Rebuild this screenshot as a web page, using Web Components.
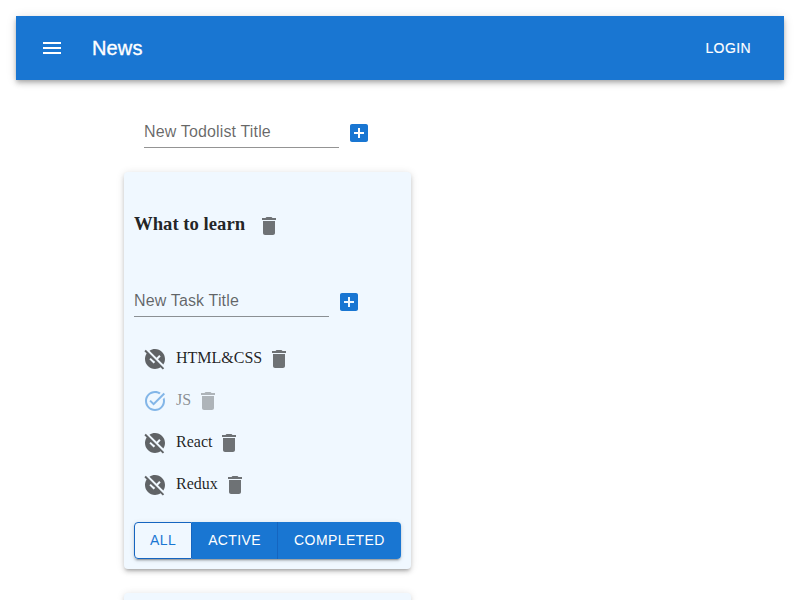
<!DOCTYPE html>
<html lang="en">
<head>
<meta charset="utf-8">
<title>Todolists</title>
<style>
html { overflow: hidden; height: 600px; }
body { margin: 0; padding: 16px 16px 0; height: 600px; box-sizing: border-box; overflow: hidden; background: #fff; color: rgba(0,0,0,.87); font-family: "Liberation Serif", "Times New Roman", serif; font-size: 16px; }
main { padding: 32px 0 0 108px; }
.lists { padding-top: 16px; display: flex; flex-direction: column; align-items: flex-start; gap: 24px; }
</style>
</head>
<body>
<app-header heading="News" action="Login"></app-header>
<main>
  <add-item placeholder="New Todolist Title" style="padding-left:20px"></add-item>
  <div class="lists">
    <todo-list heading="What to learn">
      <todo-task>HTML&amp;CSS</todo-task>
      <todo-task done>JS</todo-task>
      <todo-task>React</todo-task>
      <todo-task>Redux</todo-task>
    </todo-list>
    <todo-list collapsed></todo-list>
  </div>
</main>
<script>
const ICONS = {
  menu: 'M3 18h18v-2H3v2zm0-5h18v-2H3v2zm0-7v2h18V6H3z',
  trash: 'M6 19c0 1.1.9 2 2 2h8c1.1 0 2-.9 2-2V7H6v12zM19 4h-3.5l-1-1h-5l-1 1H5v2h14V4z',
  add: 'M19 3H5c-1.11 0-2 .9-2 2v14c0 1.1.89 2 2 2h14c1.1 0 2-.9 2-2V5c0-1.1-.9-2-2-2zm-2 10h-4v4h-2v-4H7v-2h4V7h2v4h4v2z',
  open: 'M21.19 21.19 2.81 2.81 1.39 4.22l2.27 2.27C2.61 8.07 2 9.96 2 12c0 5.52 4.48 10 10 10 2.04 0 3.93-.61 5.51-1.66l2.27 2.27 1.41-1.42zm-10.6-4.59-4.24-4.24 1.41-1.41 2.83 2.83.18-.18 1.41 1.41-1.59 1.59zm3-5.84-7.1-7.1C8.07 2.61 9.96 2 12 2c5.52 0 10 4.48 10 10 0 2.04-.61 3.93-1.66 5.51l-5.34-5.34 2.65-2.65-1.41-1.41-2.65 2.65z',
  done: 'M22 5.18 10.59 16.6l-4.24-4.24 1.41-1.41 2.83 2.83 10-10L22 5.18zm-2.21 5.04c.13.57.21 1.17.21 1.78 0 4.42-3.58 8-8 8s-8-3.58-8-8 3.58-8 8-8c1.58 0 3.04.46 4.28 1.25l1.44-1.44C16.1 2.67 14.13 2 12 2 6.48 2 2 6.48 2 12s4.48 10 10 10 10-4.48 10-10c0-1.19-.22-2.33-.6-3.39l-1.61 1.61z'
};
const SANS = '"Liberation Sans", Arial, sans-serif';

class Base extends HTMLElement {
  connectedCallback() {
    if (!this.shadowRoot) this.attachShadow({ mode: 'open' }).innerHTML = this.view();
  }
}

customElements.define('ui-icon', class extends Base {
  view() {
    return `<style>:host{display:block;flex:none;width:24px;height:24px}svg{display:block;fill:currentColor}</style>
      <svg width="24" height="24" viewBox="0 0 24 24"><path d="${ICONS[this.getAttribute('name')]}"/></svg>`;
  }
});

customElements.define('app-header', class extends Base {
  view() {
    return `<style>
      :host{display:flex;align-items:center;height:64px;box-sizing:border-box;padding:0 24px;background:#1976d2;color:#fff;font-family:${SANS};
        box-shadow:0 2px 4px -1px rgba(0,0,0,.2),0 4px 5px 0 rgba(0,0,0,.14),0 1px 10px 0 rgba(0,0,0,.12)}
      .title{flex:1;margin-left:28px;font-size:20px;font-weight:500;line-height:32px;letter-spacing:.0075em;-webkit-text-stroke:.35px #fff}
      .action{padding:6px 9px;font-size:14px;font-weight:500;line-height:24.5px;letter-spacing:.02857em;text-transform:uppercase;-webkit-text-stroke:.15px #fff}
      </style>
      <ui-icon name="menu"></ui-icon><div class="title">${this.getAttribute('heading')}</div><div class="action">${this.getAttribute('action')}</div>`;
  }
});

customElements.define('add-item', class extends Base {
  view() {
    return `<style>
      :host{display:flex;height:44px}
      .field{box-sizing:border-box;width:195px;height:36px;border-bottom:1px solid rgba(0,0,0,.42);padding-top:8px;
        font:400 16px/23px ${SANS};letter-spacing:.00938em;color:rgba(0,0,0,.6)}
      ui-icon{color:#1976d2;margin:9px 0 0 8px}
      </style>
      <div class="field">${this.getAttribute('placeholder')}</div><ui-icon name="add"></ui-icon>`;
  }
});

customElements.define('todo-task', class extends Base {
  view() {
    const done = this.hasAttribute('done');
    return `<style>
      :host{display:flex;align-items:center;height:42px}
      :host([done]){opacity:.5}
      .mark{margin:0 9px;color:${done ? '#1976d2' : 'rgba(0,0,0,.6)'}}
      .trash{margin-left:5px;color:rgba(0,0,0,.54)}
      span{line-height:18px;padding-bottom:2px}
      </style>
      <ui-icon class="mark" name="${done ? 'done' : 'open'}"></ui-icon><span><slot></slot></span><ui-icon class="trash" name="trash"></ui-icon>`;
  }
});

customElements.define('filter-group', class extends Base {
  view() {
    return `<style>
      :host{display:flex;height:37px;border-radius:4px;
        box-shadow:0 3px 1px -2px rgba(0,0,0,.2),0 2px 2px 0 rgba(0,0,0,.14),0 1px 5px 0 rgba(0,0,0,.12)}
      div{box-sizing:border-box;padding:6px 16px;background:#1976d2;color:#fff;font:500 14px/24.5px ${SANS};letter-spacing:.02857em;text-transform:uppercase}
      .all{padding:5px 15px;background:aliceblue;color:#1976d2;border:1px solid #1565c0;border-radius:4px 0 0 4px}
      .active{border-right:1px solid #1565c0}
      .completed{flex:1;border-radius:0 4px 4px 0}
      </style>
      <div class="all">All</div><div class="active">Active</div><div class="completed">Completed</div>`;
  }
});

customElements.define('todo-list', class extends Base {
  view() {
    const collapsed = this.hasAttribute('collapsed');
    return `<style>
      :host{display:block;box-sizing:border-box;width:287px;height:397px;padding:10px;border-radius:4px;background:aliceblue;
        box-shadow:0 3px 3px -2px rgba(0,0,0,.2),0 3px 4px 0 rgba(0,0,0,.14),0 1px 8px 0 rgba(0,0,0,.12)}
      :host([collapsed]){height:7px;padding:0;border-radius:4px 4px 0 0}
      header{display:flex;align-items:center;height:88px}
      h3{margin:0;font-size:18.72px;line-height:22px;padding-bottom:5px}
      header ui-icon{color:rgba(0,0,0,.54);margin-left:11.8px}
      add-item{margin-top:11px}
      .tasks{padding-top:13px}
      filter-group{margin-top:16px}
      </style>` + (collapsed ? '' : `
      <header><h3>${this.getAttribute('heading')}</h3><ui-icon name="trash"></ui-icon></header>
      <add-item placeholder="New Task Title"></add-item>
      <div class="tasks"><slot></slot></div>
      <filter-group></filter-group>`);
  }
});
</script>
</body>
</html>
